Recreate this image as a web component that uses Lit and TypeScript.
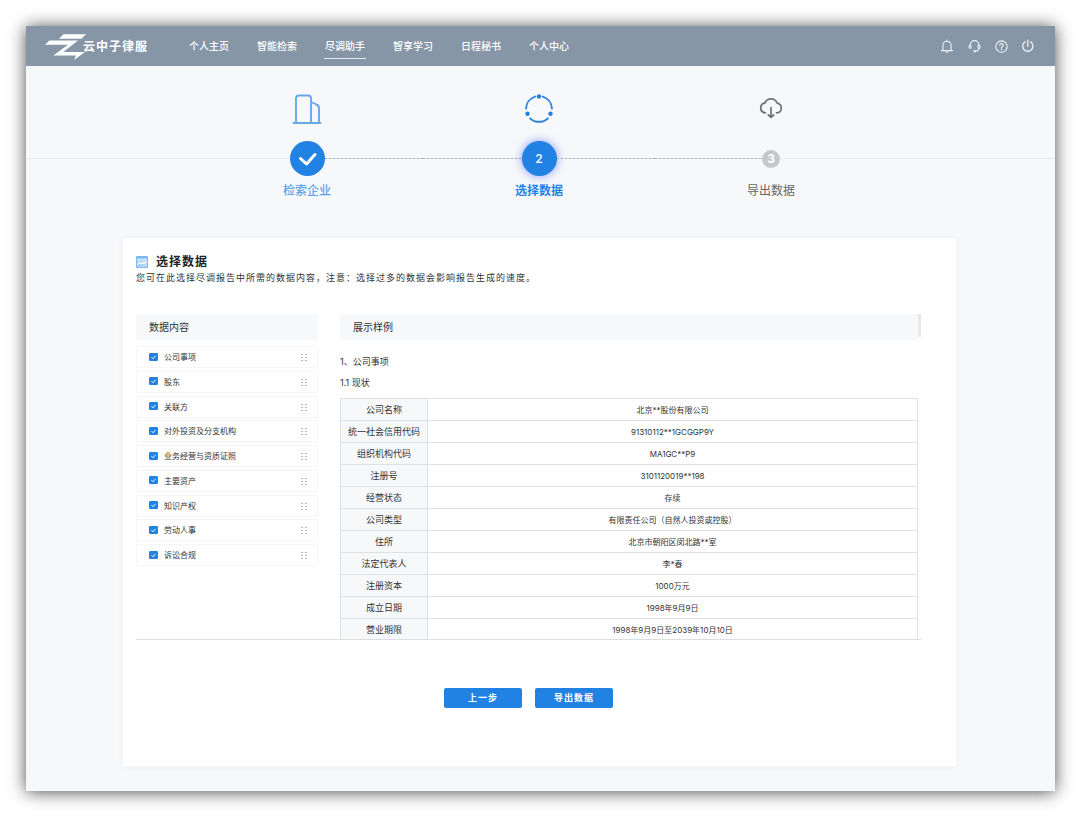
import { LitElement, html, css, svg } from "lit";
import { customElement, state } from "lit/decorators.js";
import { classMap } from "lit/directives/class-map.js";

const NAV = ["个人主页", "智能检索", "尽调助手", "智享学习", "日程秘书", "个人中心"];

const SECTIONS = [
  "公司事项",
  "股东",
  "关联方",
  "对外投资及分支机构",
  "业务经营与资质证照",
  "主要资产",
  "知识产权",
  "劳动人事",
  "诉讼合规",
];

const ROWS: [string, string][] = [
  ["公司名称", "北京**股份有限公司"],
  ["统一社会信用代码", "91310112**1GCGGP9Y"],
  ["组织机构代码", "MA1GC**P9"],
  ["注册号", "3101120019**198"],
  ["经营状态", "存续"],
  ["公司类型", "有限责任公司（自然人投资或控股）"],
  ["住所", "北京市朝阳区闵北路**室"],
  ["法定代表人", "李*春"],
  ["注册资本", "1000万元"],
  ["成立日期", "1998年9月9日"],
  ["营业期限", "1998年9月9日至2039年10月10日"],
];

const TOOLS = [
  {
    label: "通知",
    art: svg`<path d="M1.5 11.6h11M2.9 11.4V6.4a4.1 4.1 0 0 1 8.200 0v5M7 2.200V1M6 13h2" />`,
  },
  {
    label: "客服",
    art: svg`<path d="M3.200 6.500V5.900a4.300 4.300 0 0 1 8.600 0v.6M11.800 9.300c0 1.800-1.200 2.900-3.400 3" /><rect x="2.100" y="6.300" width="1.900" height="3" rx=".9" /><rect x="11" y="6.300" width="1.900" height="3" rx=".9" /><circle cx="7.700" cy="12.300" r=".7" />`,
  },
  {
    label: "帮助",
    art: svg`<circle cx="7.500" cy="7.600" r="5.700" /><path d="M5.800 6.300a1.700 1.700 0 1 1 2.500 1.500c-.6.3-.8.6-.8 1.200M7.500 10.100v.7" />`,
  },
  {
    label: "退出",
    art: svg`<path d="M6.800 1.200v6M4 2.900a5.100 5.100 0 1 0 5.600 0" stroke-width="1.300" />`,
  },
];

@customElement("top-bar")
export class TopBar extends LitElement {
  static styles = css`
    :host {
      display: flex;
      align-items: center;
      height: 40px;
      padding: 0 20px 0 19px;
      background: #8696a7;
      color: #fff;
    }
    .brand {
      display: flex;
      align-items: center;
      padding-top: 2px;
      font-size: 12px;
      font-weight: 600;
      letter-spacing: 1px;
      line-height: 18px;
      color: #fff;
      text-decoration: none;
    }
    .mark {
      width: 38px;
      height: 26px;
      overflow: visible;
      fill: #fff;
    }
    .nav {
      display: flex;
      gap: 26px;
      margin-left: 40px;
      flex: 1;
    }
    .link {
      padding: 0 1px;
      border-top: 1px solid transparent;
      border-bottom: 1px solid transparent;
      font-size: 10px;
      font-weight: 500;
      line-height: 24px;
      color: #fff;
      text-decoration: none;
      white-space: nowrap;
    }
    .link.active {
      border-bottom-color: #e6eaee;
    }
    .tools {
      display: flex;
      gap: 13px;
    }
    .tool {
      display: block;
      width: 14px;
      height: 14px;
      padding: 0;
      border: 0;
      background: none;
      cursor: pointer;
    }
    .glyph {
      display: block;
      width: 14px;
      height: 14px;
      fill: none;
      stroke: #eef1f4;
      stroke-width: 1.1;
      stroke-linecap: round;
    }
  `;

  @state() private current = 2;

  render() {
    return html`
      <a class="brand" href="#">
        <svg class="mark" viewBox="0 0 38 26" aria-hidden="true">
          <path d="M18.5 .3H41l-4.6 4.4H14z" />
          <path d="M4.5 6.6H33L18.2 17.9H40L29 26l2-4.4H8.3L23 10.7H0z" />
        </svg>
        <span>云中子律服</span>
      </a>
      <nav class="nav">
        ${NAV.map(
          (name, i) => html`<a
            class=${classMap({ link: true, active: i === this.current })}
            href="#"
            @click=${(e: Event) => {
              e.preventDefault();
              this.current = i;
            }}
            >${name}</a
          >`,
        )}
      </nav>
      <div class="tools">
        ${TOOLS.map(
          (t) => html`<button class="tool" aria-label=${t.label}>
            <svg class="glyph" viewBox="0 0 14 14">${t.art}</svg>
          </button>`,
        )}
      </div>
    `;
  }
}

@customElement("step-track")
export class StepTrack extends LitElement {
  static styles = css`
    :host {
      display: block;
      padding: 24px 100px 39px 97px;
      background: linear-gradient(#e9ecee, #e9ecee) no-repeat 0 92px / 100% 1px;
    }
    .steps {
      display: grid;
      grid-template-columns: repeat(3, 1fr);
      max-width: 696px;
      margin: 0 auto;
      padding: 0;
      list-style: none;
    }
    .step {
      text-align: center;
    }
    .art {
      display: block;
      width: 38px;
      height: 38px;
      margin: 0 auto 13px;
      fill: none;
      stroke-linecap: round;
      stroke-linejoin: round;
    }
    .rail {
      display: flex;
      align-items: center;
      height: 35px;
      margin-bottom: 7px;
    }
    .line {
      flex: 1;
      height: 1px;
    }
    .line.on {
      background: repeating-linear-gradient(90deg, #a9abae 0 2px, #e4e6e8 2px 4px);
    }
    .dot {
      display: flex;
      align-items: center;
      justify-content: center;
      width: 35px;
      height: 35px;
      border-radius: 50%;
      background: #2182e3;
      color: #fff;
      font-size: 12px;
      font-weight: 500;
    }
    .dot.now {
      box-shadow: 0 0 10px rgba(60, 90, 255, 0.6);
    }
    .dot.todo {
      width: 18px;
      height: 18px;
      background: #c6c7c9;
      font-weight: 700;
    }
    .tick {
      width: 19px;
      height: 14px;
      fill: none;
      stroke: #fff;
      stroke-width: 3;
      stroke-linecap: round;
      stroke-linejoin: round;
    }
    .label {
      font-size: 12px;
      line-height: 16px;
      font-weight: 500;
      color: #5fa3e6;
    }
    .label.now {
      font-weight: 700;
      color: #2182e3;
    }
    .label.todo {
      font-weight: 400;
      color: #666;
    }
  `;

  render() {
    return html`
      <ol class="steps">
        <li class="step">
          <svg class="art" viewBox="0 0 38 38" stroke="#66a8ea" stroke-width="1.9" aria-hidden="true">
            <path d="M5.500 33h27M8 33V8.500q0-3 3-3h9q3 0 3 3V33M23 12l5.500 2.500q2.500 1 2.500 4V33" />
          </svg>
          <div class="rail">
            <span class="line"></span>
            <span class="dot">
              <svg class="tick" viewBox="0 0 19 14" aria-label="已完成"><path d="M2.500 6.500l6 5.500 8.500-9.500" /></svg>
            </span>
            <span class="line on"></span>
          </div>
          <div class="label">检索企业</div>
        </li>
        <li class="step" aria-current="step">
          <svg class="art" viewBox="0 0 38 38" stroke="#2f87e0" stroke-width="2" aria-hidden="true">
            <path d="M15.200 6.600A13 13 0 0 0 6.100 18.500M22.800 6.600A13 13 0 0 1 31.900 18.500M10.200 28.400A13 13 0 0 0 27.800 28.400" />
            <g fill="#2182e3" stroke="none">
              <circle cx="19" cy="6.500" r="2.200" />
              <circle cx="7.500" cy="23.800" r="2.200" />
              <circle cx="30.500" cy="23.800" r="2.200" />
            </g>
          </svg>
          <div class="rail">
            <span class="line on"></span>
            <span class="dot now">2</span>
            <span class="line on"></span>
          </div>
          <div class="label now">选择数据</div>
        </li>
        <li class="step">
          <svg class="art" viewBox="0 0 38 38" stroke="#707275" stroke-width="1.700" aria-hidden="true">
            <path d="M13.500 22.800q-4.800-.3-4.800-4.900 0-4.100 4.300-5 1.600-4 6-4t6 4q4.300 1.200 4.300 5 0 4.600-4.800 4.900M19 17.500v9.500M16.300 25l2.700 2.400 2.700-2.400" />
          </svg>
          <div class="rail">
            <span class="line on"></span>
            <span class="dot todo">3</span>
            <span class="line"></span>
          </div>
          <div class="label todo">导出数据</div>
        </li>
      </ol>
    `;
  }
}

@customElement("data-picker")
export class DataPicker extends LitElement {
  static styles = css`
    :host {
      display: block;
      padding: 15px 35px 58px 13px;
      border-radius: 2px;
      background: #fff;
      box-shadow: 0 0 6px rgba(60, 80, 100, 0.06);
      color: #333;
    }
    .title {
      display: flex;
      align-items: center;
      gap: 8px;
      margin: 0;
      font-size: 12px;
      font-weight: 700;
      letter-spacing: 1px;
      line-height: 18px;
      color: #222;
    }
    .badge {
      width: 12px;
      height: 12px;
    }
    .hint {
      margin: 0 0 30px;
      font-size: 9px;
      letter-spacing: 1px;
      line-height: 13px;
    }
    .pane {
      display: flex;
      height: 325px;
      overflow: hidden;
      border-bottom: 1px solid #dcdee0;
    }
    .contents {
      width: 182px;
      margin-right: 22px;
    }
    .preview {
      flex: 1;
    }
    .thumb {
      width: 3px;
      height: 23px;
      background: #e8e8e8;
    }
    .head {
      margin: 0;
      padding: 0 13px;
      background: #f7f8fa;
      font-size: 10px;
      font-weight: 400;
      line-height: 26px;
    }
    .list {
      display: flex;
      flex-direction: column;
      justify-content: space-between;
      height: 220px;
      margin: 6px 0 0;
      padding: 0;
      list-style: none;
    }
    .item {
      display: flex;
      align-items: center;
      height: 22px;
      box-sizing: border-box;
      padding: 0 10px 0 12px;
      border: 1px solid #f5f6f8;
    }
    .pick {
      display: flex;
      flex: 1;
      align-items: center;
      gap: 6px;
      font-size: 8px;
      line-height: 12px;
    }
    .box {
      appearance: none;
      width: 9px;
      height: 8px;
      margin: 0 0 1px;
      border: 1px solid #2182e3;
      border-radius: 1px;
      background: #fff;
    }
    .box:checked {
      background: #2182e3
        url("data:image/svg+xml,%3Csvg xmlns='http://www.w3.org/2000/svg' viewBox='0 0 7 7'%3E%3Cpath d='M1.500 3.400l1.500 1.500 2.600-2.700' fill='none' stroke='white' stroke-width='.9'/%3E%3C/svg%3E")
        center / 7px 7px no-repeat;
    }
    .grip {
      width: 6px;
      height: 8px;
      fill: #b5b7ba;
    }
    .line {
      margin: 0;
      font-size: 9px;
      font-weight: 400;
      line-height: 21px;
    }
    .line.first {
      margin-top: 11px;
    }
    .table {
      width: 100%;
      margin-top: 5px;
      border-collapse: collapse;
      table-layout: fixed;
    }
    .key,
    .value {
      height: 21px;
      padding: 0;
      border: 1px solid #dfe1e3;
      line-height: 12px;
      text-align: center;
    }
    .key {
      width: 86px;
      background: #f7f8fa;
      font-size: 9px;
      font-weight: 400;
    }
    .value {
      font-size: 8px;
    }
    .actions {
      display: flex;
      justify-content: center;
      gap: 13px;
      margin-top: 48px;
    }
    .action {
      width: 78px;
      height: 20px;
      padding: 0;
      border: 0;
      border-radius: 2px;
      background: #2182e3;
      color: #fff;
      font-family: inherit;
      font-size: 9px;
      font-weight: 700;
      letter-spacing: 1px;
      line-height: 20px;
      cursor: pointer;
    }
  `;

  @state() private chosen = new Set(SECTIONS);

  private toggle(name: string) {
    const next = new Set(this.chosen);
    if (!next.delete(name)) next.add(name);
    this.chosen = next;
  }

  render() {
    return html`
      <h2 class="title">
        <svg class="badge" viewBox="0 0 12 12" aria-hidden="true">
          <rect width="12" height="12" rx="1" fill="#7db8ef" />
          <path d="M1 3.500h10V11H1z" fill="#b9dbf8" />
          <path d="M1 3.200h10" stroke="#fff" stroke-width=".8" />
          <path d="M1.500 8.800l2-1.600 1.800 1.200 1.900-1.700 1 .8 2.300-1.900" fill="none" stroke="#fff" stroke-width="1.100" />
          <path d="M1.500 9.900l2-1.500 1.800 1.100 1.900-1.600" fill="none" stroke="#4a98e4" stroke-width=".6" />
        </svg>
        <span>选择数据</span>
      </h2>
      <p class="hint">您可在此选择尽调报告中所需的数据内容，注意：选择过多的数据会影响报告生成的速度。</p>
      <div class="pane">
        <section class="contents">
          <h3 class="head">数据内容</h3>
          <ul class="list">
            ${SECTIONS.map(
              (name) => html`<li class="item">
                <label class="pick">
                  <input
                    class="box"
                    type="checkbox"
                    .checked=${this.chosen.has(name)}
                    @change=${() => this.toggle(name)}
                  />
                  <span>${name}</span>
                </label>
                <svg class="grip" viewBox="0 0 6 8" aria-hidden="true">
                  <path d="M0 1h2v1H0zM4 1h2v1H4zM0 4h2v1H0zM4 4h2v1H4zM0 7h2v1H0zM4 7h2v1H4z" />
                </svg>
              </li>`,
            )}
          </ul>
        </section>
        <section class="preview">
          <h3 class="head">展示样例</h3>
          <h4 class="line first">1、公司事项</h4>
          <h5 class="line">1.1 现状</h5>
          <table class="table">
            <tbody>
              ${ROWS.map(
                ([key, value]) => html`<tr>
                  <th class="key" scope="row">${key}</th>
                  <td class="value">${value}</td>
                </tr>`,
              )}
            </tbody>
          </table>
        </section>
        <div class="thumb"></div>
      </div>
      <div class="actions">
        <button class="action">上一步</button>
        <button class="action">导出数据</button>
      </div>
    `;
  }
}

@customElement("app-root")
export class AppRoot extends LitElement {
  static styles = css`
    :host {
      display: flex;
      box-sizing: border-box;
      min-height: 100vh;
      padding: 26px 25px 25px 26px;
      background: #fff;
      font-family: Inter, "Noto Sans CJK SC", sans-serif;
    }
    .window {
      flex: 1;
      background: #f7f8fa;
      box-shadow: 0 1px 16px rgba(0, 0, 0, 0.7);
    }
    .card {
      margin: 0 99px 25px 97px;
    }
  `;

  render() {
    return html`
      <main class="window">
        <top-bar></top-bar>
        <step-track></step-track>
        <data-picker class="card"></data-picker>
      </main>
    `;
  }
}
